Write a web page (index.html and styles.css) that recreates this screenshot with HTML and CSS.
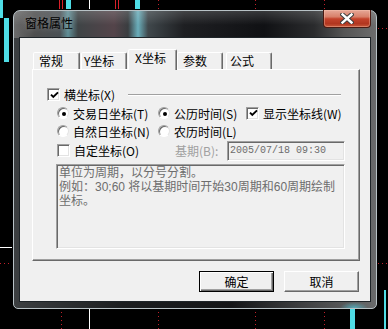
FILE: index.html
```html
<!DOCTYPE html>
<html>
<head>
    <title>窗格属性</title>
    <link rel="stylesheet" href="styles.css">
</head>
<body>
    <div class="desktop">
        <!-- chart lines behind the dialog -->
        <svg class="chart" width="388" height="329">
            <rect x="0" y="0" width="3" height="18" fill="#4fdde6"/>
            <rect x="4" y="18" width="5" height="44" fill="#4fdde6"/>
            <rect x="59" y="0" width="1" height="9" fill="#d8202a"/>
            <rect x="62" y="0" width="1" height="9" fill="#d8202a"/>
            <rect x="66" y="0" width="5" height="9" fill="#4fdde6"/>
            <rect x="89" y="0" width="1" height="9" fill="#ffffff"/>
            <rect x="115" y="0" width="1" height="9" fill="#d8202a"/>
            <rect x="118" y="0" width="1" height="9" fill="#d8202a"/>
            <rect x="135" y="0" width="5" height="9" fill="#4fdde6"/>
            <line x1="158.5" y1="0" x2="158.5" y2="329" stroke="#c0202a" stroke-dasharray="1 3"/>
            <line x1="255.5" y1="0" x2="255.5" y2="329" stroke="#c0202a" stroke-dasharray="1 3"/>
            <line x1="324.5" y1="0" x2="324.5" y2="329" stroke="#c0202a" stroke-dasharray="1 3"/>
            <line x1="61.5" y1="300" x2="61.5" y2="329" stroke="#c0202a" stroke-dasharray="1 3"/>
            <line x1="378" y1="28.5" x2="388" y2="28.5" stroke="#c0202a" stroke-dasharray="1 3"/>
            <line x1="0" y1="263.5" x2="12" y2="263.5" stroke="#c0202a" stroke-dasharray="1 3"/>
            <line x1="378" y1="263.5" x2="388" y2="263.5" stroke="#c0202a" stroke-dasharray="1 3"/>
            <rect x="0" y="247" width="12" height="1" fill="#ffffff"/>
            <rect x="89" y="300" width="1" height="29" fill="#ffffff"/>
            <rect x="350" y="300" width="5" height="29" fill="#4fdde6"/>
            <rect x="384" y="290" width="2" height="39" fill="#4fdde6"/>
        </svg>

        <div class="window">
            <div class="titlebar">
                <span class="title">窗格属性</span>
                <button class="close">
                    <svg width="14" height="11" viewBox="0 0 14 11">
                        <path d="M2.5 1.5 L11.5 9.5 M11.5 1.5 L2.5 9.5" stroke="#3c3c3c" stroke-width="4.4" stroke-linecap="square"/>
                        <path d="M2.5 1.5 L11.5 9.5 M11.5 1.5 L2.5 9.5" stroke="#ffffff" stroke-width="2.4" stroke-linecap="square"/>
                    </svg>
                </button>
            </div>

            <div class="client">
                <div class="tabs">
                    <div class="tab tab-first">常规</div>
                    <div class="tab tab-y">Y坐标</div>
                    <div class="tab active">X坐标</div>
                    <div class="tab tab-params">参数</div>
                    <div class="tab tab-formula">公式</div>
                </div>

                <div class="panel">
                    <div class="row head">
                        <span class="check"><svg width="9" height="9"><polyline points="1,3.6 3.3,6 8,1.4" fill="none" stroke="#000" stroke-width="1.9"/></svg></span>
                        <span class="label head-label">横坐标(X)</span>
                        <span class="rule"></span>
                    </div>
                    <div class="row sub">
                        <span class="opt col1"><span class="radio on"></span><span class="label">交易日坐标(T)</span></span>
                        <span class="opt col2"><span class="radio on"></span><span class="label">公历时间(S)</span></span>
                        <span class="opt"><span class="check"><svg width="9" height="9"><polyline points="1,3.6 3.3,6 8,1.4" fill="none" stroke="#000" stroke-width="1.9"/></svg></span><span class="label">显示坐标线(W)</span></span>
                    </div>
                    <div class="row sub">
                        <span class="opt col1"><span class="radio"></span><span class="label">自然日坐标(N)</span></span>
                        <span class="opt col2"><span class="radio"></span><span class="label">农历时间(L)</span></span>
                    </div>
                    <div class="row sub base">
                        <span class="opt col-custom"><span class="check"></span><span class="label">自定坐标(O)</span></span>
                        <span class="base-label">基期(B):</span>
                        <span class="field">2005/07/18 09:30</span>
                    </div>
                    <div class="memo">
                        <div>单位为周期，以分号分割。</div>
                        <div>例如：30;60 将以基期时间开始30周期和60周期绘制</div>
                        <div>坐标。</div>
                    </div>
                </div>

                <div class="buttons">
                    <button class="btn default">确定</button>
                    <button class="btn">取消</button>
                </div>
            </div>
        </div>
    </div>
</body>
</html>
```

FILE: styles.css
```css
* {
    box-sizing: border-box;
}
body {
    margin: 0;
    background: #000;
    font-family: "Noto Sans CJK SC", "Noto Sans", sans-serif;
    font-size: 12px;
    color: #000;
}
.desktop {
    position: relative;
    width: 388px;
    height: 329px;
    overflow: hidden;
    background: #000;
    padding: 10px 0 0 13px;
}
.chart {
    position: absolute;
    left: 0;
    top: 0;
}
.window {
    position: relative;
    width: 364px;
    height: 299px;
    padding: 0 5px 6px;
    border: 1px solid #b8c2c6;
    border-radius: 7px 7px 5px 5px;
    background:
        linear-gradient(to bottom, rgba(255, 255, 255, 0.16), rgba(255, 255, 255, 0) 14px) top / 100% 27px no-repeat,
        linear-gradient(to right, #6b6b6b 0px, #4e4e4e 20px, #4a5054 46px, #5f8e96 54px, #3f4446 64px,
            #54444a 100px, #3a3d40 114px, #6aaebb 124px, #40484c 134px, #1e1f22 170px,
            #101114 250px, #2a2b2d 300px, #555 330px, #6e6e6e 364px) top / 100% 27px no-repeat,
        radial-gradient(ellipse 14px 6px at 340px 100%, rgba(80, 200, 220, 0.7), rgba(80, 200, 220, 0)),
        linear-gradient(to right, #3c3f41, #1c1e20 30%, #141517 60%, #6a6b6c 100%);
}
.titlebar {
    display: flex;
    align-items: flex-start;
    height: 26px;
}
.title {
    flex: 1;
    padding: 5px 0 0 6px;
    line-height: 14px;
    text-shadow: 0 0 6px rgba(255, 255, 255, 0.35);
}
.close {
    display: flex;
    align-items: center;
    justify-content: center;
    width: 48px;
    height: 18px;
    margin-top: -1px;
    padding: 0;
    border: 1px solid #4a1a12;
    border-top: none;
    border-radius: 0 0 4px 4px;
    background: linear-gradient(to bottom, #e6a898 0%, #d8806a 40%, #c4432c 52%, #b23620 80%, #c8583a 100%);
    box-shadow: inset 0 0 0 1px rgba(255, 210, 190, 0.35);
}
.client {
    height: 265px;
    border: 1px solid #1e2428;
    background: #f0f0f0;
    padding: 11px 10px 0 12px;
}
.tabs {
    display: flex;
    align-items: flex-end;
    height: 20px;
    padding-left: 1px;
}
.tab {
    height: 17px;
    padding: 1px 0 0 5px;
    line-height: 14px;
    background: #f0f0f0;
    border: 1px solid;
    border-bottom: none;
    border-color: #fff #696969 transparent #fff;
    border-radius: 2px 2px 0 0;
    box-shadow: inset -1px 0 0 #a0a0a0;
    white-space: nowrap;
}
.tab-first {
    width: 47px;
}
.tab-y {
    width: 46px;
    margin-left: 1px;
    padding-left: 2px;
}
.tab.active {
    position: relative;
    z-index: 1;
    width: 49px;
    height: 21px;
    margin-left: 1px;
    margin-bottom: -1px;
    padding-left: 6px;
}
.tab-params {
    width: 46px;
}
.tab-formula {
    width: 46px;
    margin-left: 3px;
    padding-left: 3px;
}
.panel {
    height: 192px;
    border: 1px solid;
    border-color: #fff #696969 #696969 #fff;
    box-shadow: inset -1px -1px 0 #a0a0a0;
    padding: 16px 0 0 14px;
}
.row {
    display: flex;
    align-items: center;
    white-space: nowrap;
}
.head {
    height: 17px;
}
.head-label {
    width: 60px;
    margin-left: 4px;
}
.rule {
    flex: 1;
    height: 2px;
    margin: 0 18px 0 4px;
    border-top: 1px solid #a0a0a0;
    border-bottom: 1px solid #fff;
}
.sub {
    height: 18px;
    margin-left: 10px;
}
.sub:nth-child(2) {
    margin-top: 1px;
}
.base {
    height: 21px;
}
.opt {
    display: flex;
    align-items: center;
}
.opt .label {
    margin-left: 4px;
}
.col1 {
    width: 101px;
}
.col2 {
    width: 88px;
}
.col-custom {
    width: 118px;
}
.check {
    display: flex;
    align-items: center;
    justify-content: center;
    width: 13px;
    height: 13px;
    background: #fff;
    border: 1px solid;
    border-color: #a0a0a0 #fff #fff #a0a0a0;
    box-shadow: inset 1px 1px 0 #696969, inset -1px -1px 0 #e3e3e3;
}
.check svg {
    display: block;
    margin: 1px 0 0 1px;
}
.radio {
    display: flex;
    align-items: center;
    justify-content: center;
    width: 12px;
    height: 12px;
    border-radius: 50%;
    background: #fff;
    border: 1px solid;
    border-color: #a0a0a0 #e3e3e3 #fff #a0a0a0;
    box-shadow: inset 1px 1px 0 #696969;
}
.radio.on::after {
    content: "";
    width: 4px;
    height: 4px;
    border-radius: 50%;
    background: #000;
    margin: 1px 0 0 1px;
}
.base-label {
    width: 52px;
    color: #a0a0a0;
}
.field {
    width: 118px;
    height: 20px;
    padding: 0 2px;
    line-height: 18px;
    font-family: "Liberation Mono", monospace;
    font-size: 10px;
    color: #6d6d6d;
    background: #f0f0f0;
    border: 1px solid;
    border-color: #a0a0a0 #fff #fff #a0a0a0;
    box-shadow: inset 1px 1px 0 #696969, inset -1px -1px 0 #e3e3e3;
}
.memo {
    width: 289px;
    height: 85px;
    margin: 3px 0 0 9px;
    padding: 1px 2px;
    font-family: "Liberation Sans", "Noto Sans CJK SC", sans-serif;
    line-height: 14px;
    color: #6d6d6d;
    white-space: nowrap;
    overflow: hidden;
    background: #f0f0f0;
    border: 1px solid;
    border-color: #a0a0a0 #fff #fff #a0a0a0;
    box-shadow: inset 1px 1px 0 #696969, inset -1px -1px 0 #e3e3e3;
}
.buttons {
    display: flex;
    justify-content: flex-end;
    gap: 10px;
    margin: 10px 1px 0 0;
}
.btn {
    width: 75px;
    height: 21px;
    padding: 0;
    font: inherit;
    line-height: 17px;
    color: #000;
    background: #f0f0f0;
    border: 1px solid;
    border-color: #fff #696969 #696969 #fff;
    box-shadow: inset -1px -1px 0 #a0a0a0;
}
.btn.default {
    border-color: #000;
    box-shadow: inset 1px 1px 0 #fff, inset -1px -1px 0 #696969, inset -2px -2px 0 #a0a0a0;
}
```
